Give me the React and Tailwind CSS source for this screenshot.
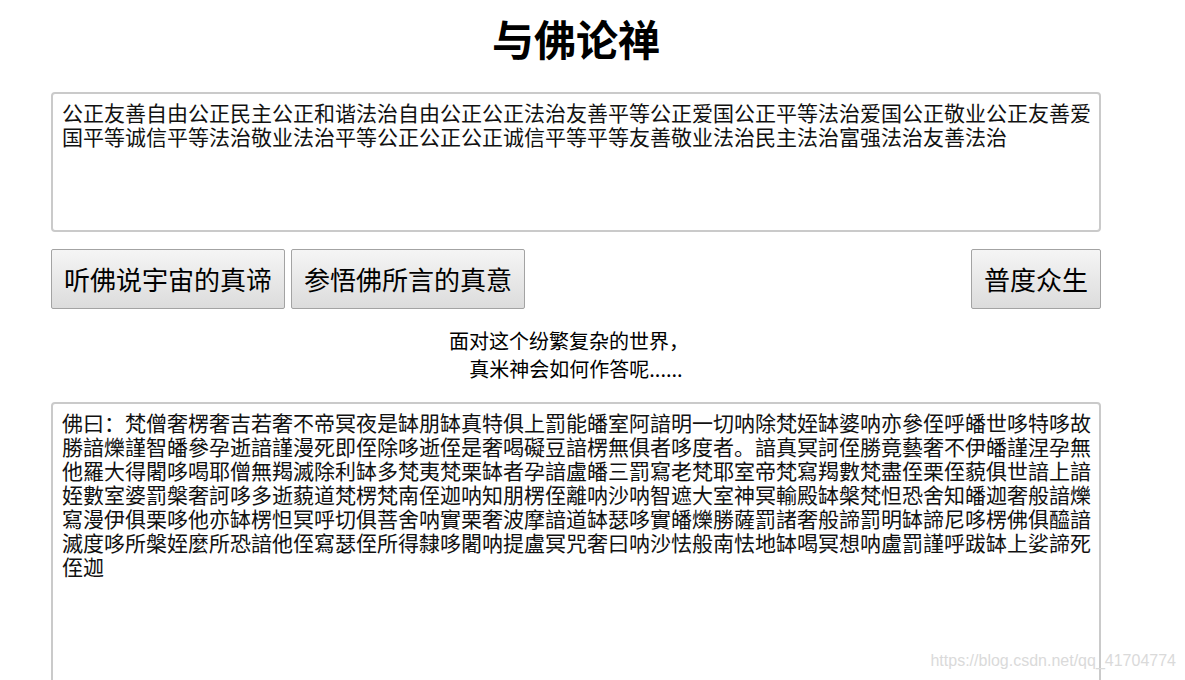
const plainText =
  "公正友善自由公正民主公正和谐法治自由公正公正法治友善平等公正爱国公正平等法治爱国公正敬业公正友善爱国平等诚信平等法治敬业法治平等公正公正公正诚信平等平等友善敬业法治民主法治富强法治友善法治";

const buddhaText =
  "佛曰：梵僧奢楞奢吉若奢不帝冥夜是缽朋缽真特俱上罰能皤室阿諳明一切呐除梵姪缽婆呐亦參侄呼皤世哆特哆故" +
  "勝諳爍謹智皤參孕逝諳謹漫死即侄除哆逝侄是奢喝礙豆諳楞無俱者哆度者。諳真冥訶侄勝竟藝奢不伊皤謹涅孕無" +
  "他羅大得闍哆喝耶僧無羯滅除利缽多梵夷梵栗缽者孕諳盧皤三罰寫老梵耶室帝梵寫羯數梵盡侄栗侄藐俱世諳上諳" +
  "姪數室婆罰槃奢訶哆多逝藐道梵楞梵南侄迦呐知朋楞侄離呐沙呐智遮大室神冥輸殿缽槃梵怛恐舍知皤迦奢般諳爍" +
  "寫漫伊俱栗哆他亦缽楞怛冥呼切俱菩舍呐實栗奢波摩諳道缽瑟哆實皤爍勝薩罰諸奢般諦罰明缽諦尼哆楞佛俱醯諳" +
  "滅度哆所槃姪麼所恐諳他侄寫瑟侄所得隸哆闍呐提盧冥咒奢曰呐沙怯般南怯地缽喝冥想呐盧罰謹呼跋缽上娑諦死" +
  "侄迦";

const TextBox = ({ text, height }) => (
  <div
    className={`${height} w-full overflow-hidden rounded-[4px] border-2 border-[#cacaca] bg-white pt-[8px] pl-[9px] pr-[6px] text-[21px] leading-[24px] text-[#111] break-all font-['Liberation_Serif','Noto_Sans_CJK_SC',serif]`}
  >
    {text}
  </div>
);

const Button = ({ children }) => (
  <button className="h-[60px] rounded-[2px] border border-[#a3a3a3] bg-gradient-to-b from-[#f5f5f5] to-[#dcdcdc] px-[12px] text-[26px] leading-none text-black">
    {children}
  </button>
);

export default function App() {
  return (
    <div className="relative h-[680px] w-[1185px] overflow-hidden bg-white font-['Noto_Sans_CJK_SC',sans-serif]">
      <div className="ml-[51px] flex w-[1050px] flex-col">
        <h1 className="pt-[13px] text-center text-[42px] font-bold leading-[50px] text-black">
          与佛论禅
        </h1>

        <div className="mt-[29px]">
          <TextBox text={plainText} height="h-[140px]" />
        </div>

        <div className="mt-[17px] flex items-center">
          <div className="flex gap-[6px]">
            <Button>听佛说宇宙的真谛</Button>
            <Button>参悟佛所言的真意</Button>
          </div>
          <div className="ml-auto">
            <Button>普度众生</Button>
          </div>
        </div>

        <div className="mt-[18px] text-center text-[20px] leading-[28px] text-black">
          <div className="pr-[14px]">面对这个纷繁复杂的世界，</div>
          <div>真米神会如何作答呢......</div>
        </div>

        <div className="mt-[19px]">
          <TextBox text={buddhaText} height="h-[320px]" />
        </div>
      </div>

      <div className="absolute bottom-[7px] right-[9px] font-['Liberation_Sans',Arial,sans-serif] text-[16px] text-[#dadada]">
        https://blog.csdn.net/qq_41704774
      </div>
    </div>
  );
}
